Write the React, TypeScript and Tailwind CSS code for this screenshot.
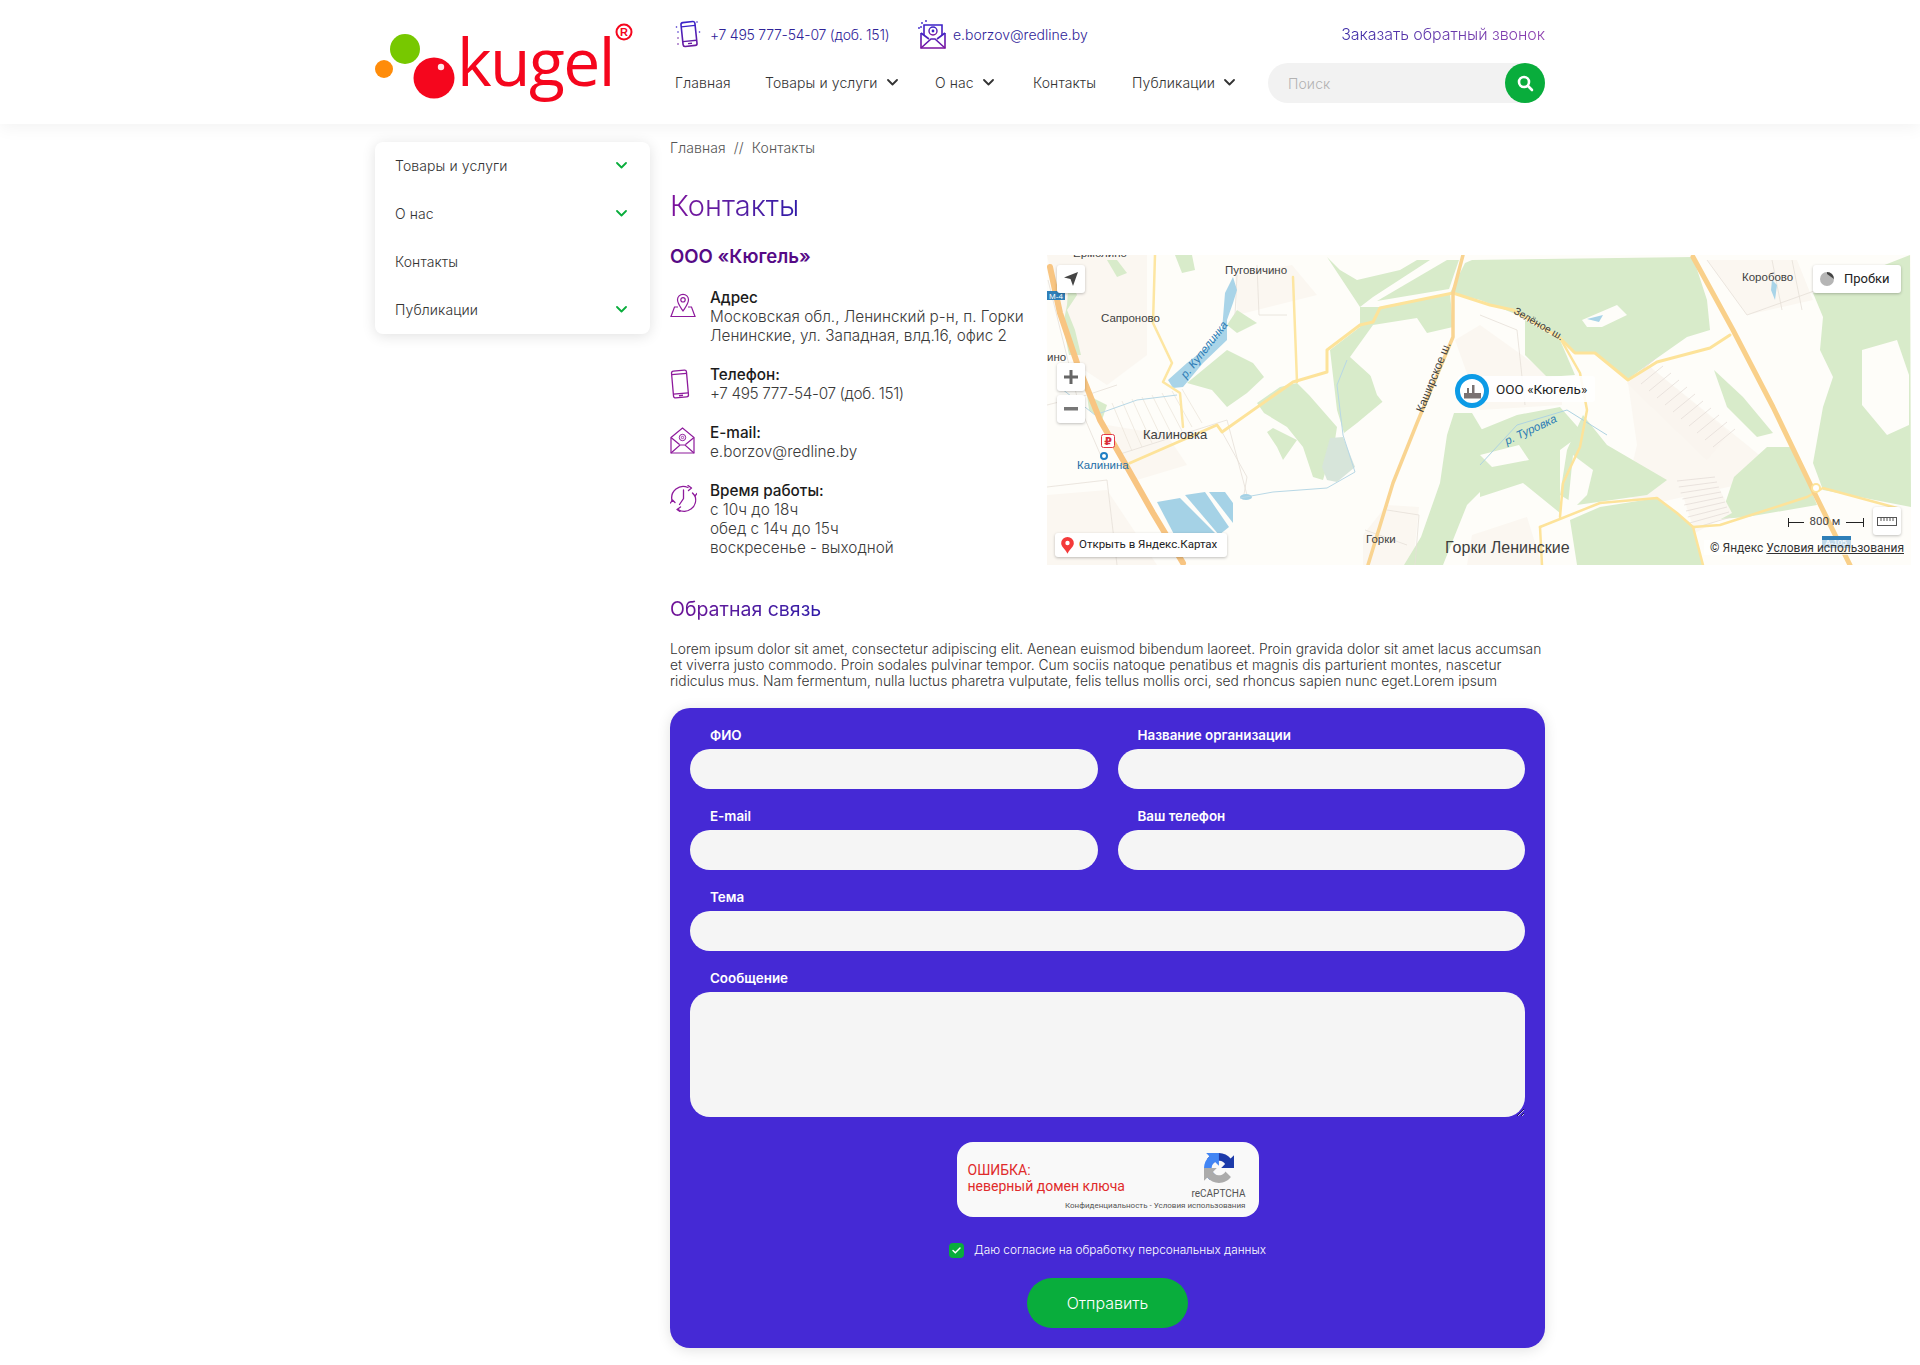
import React from 'react';

const NavChevron = ({ className }: { className?: string }) => (
  <svg width="11" height="7" viewBox="0 0 11 7" fill="none" className={className}>
    <path d="M1 1l4.5 4.5L10 1" stroke="currentColor" strokeWidth="1.8" strokeLinecap="round" strokeLinejoin="round" />
  </svg>
);

const Logo = () => (
  <div className="relative w-[265px] h-[124px] shrink-0">
    <svg width="265" height="124" viewBox="0 0 265 124" className="absolute left-0 top-0">
      <circle cx="30" cy="49" r="15" fill="#77c800" />
      <circle cx="9" cy="69" r="9" fill="#ff8c0a" />
      <circle cx="59" cy="78" r="20.5" fill="#f5061d" />
      <circle cx="66" cy="67" r="3.2" fill="#ffe9e9" />
      <circle cx="249" cy="32" r="7.5" fill="none" stroke="#f5061d" strokeWidth="2" />
      <text x="249" y="36" textAnchor="middle" fontSize="11" fontWeight="700" fill="#f5061d" fontFamily="Liberation Sans, sans-serif">R</text>
    </svg>
    <span className="absolute left-[82px] top-[15px] font-['Open_Sans',sans-serif] font-medium text-[66px] leading-[90px] text-[#f5061d] tracking-[-1.6px]">kugel</span>
  </div>
);

const HeaderPhoneIcon = () => (
  <svg width="26" height="28" viewBox="0 0 26 28" fill="none">
    <defs>
      <linearGradient id="hp" x1="0" y1="0" x2="0" y2="1">
        <stop offset="0" stopColor="#3a22c8" />
        <stop offset="1" stopColor="#6a1ba0" />
      </linearGradient>
    </defs>
    <g transform="rotate(-6 14 14)">
      <rect x="7" y="2" width="14" height="24" rx="2" stroke="url(#hp)" strokeWidth="1.6" />
      <path d="M7 6h14M7 21h14M12 23.5h4" stroke="url(#hp)" strokeWidth="1.3" />
    </g>
    <circle cx="1.5" cy="7" r="0.8" fill="#3a22c8" />
    <circle cx="3" cy="12" r="0.8" fill="#3a22c8" />
    <circle cx="3" cy="18" r="0.8" fill="#6a1ba0" />
    <circle cx="3" cy="24" r="0.8" fill="#6a1ba0" />
    <circle cx="24.5" cy="12" r="0.8" fill="#3a22c8" />
    <circle cx="22" cy="2" r="0.8" fill="#3a22c8" />
  </svg>
);

const HeaderMailIcon = () => (
  <svg width="28" height="29" viewBox="0 0 28 29" fill="none">
    <defs>
      <linearGradient id="hm" x1="0" y1="0" x2="0" y2="1">
        <stop offset="0" stopColor="#3a22c8" />
        <stop offset="1" stopColor="#7a14a0" />
      </linearGradient>
    </defs>
    <path d="M3 13v15h24V13M6 15V5h18v10" stroke="url(#hm)" strokeWidth="1.6" />
    <path d="M3 28l10-9h4l10 9M3 13l8 6M27 13l-8 6" stroke="url(#hm)" strokeWidth="1.6" />
    <circle cx="15" cy="11" r="4" stroke="url(#hm)" strokeWidth="1.4" />
    <circle cx="15" cy="11" r="1.4" fill="#3a22c8" />
    <circle cx="8" cy="1" r="0.9" fill="#3a22c8" />
    <circle cx="4" cy="3" r="0.9" fill="#3a22c8" />
    <circle cx="1" cy="8" r="0.9" fill="#3a22c8" />
    <circle cx="3" cy="7" r="0.9" fill="#3a22c8" />
  </svg>
);

const Header = () => (
  <header className="h-[124px] bg-white shadow-[0_4px_16px_rgba(0,0,0,0.05)] relative z-10">
    <div className="w-[1170px] mx-auto flex">
      <div className="w-[300px] shrink-0">
        <Logo />
      </div>
      <div className="flex-1 flex flex-col">
        <div className="flex items-center h-[28px] mt-[20px]">
          <HeaderPhoneIcon />
          <span className="ml-[9px] w-[208px] text-[14px] text-[#2f2398] font-light tracking-[-0.25px]">+7 495 777-54-07 (доб. 151)</span>
          <HeaderMailIcon />
          <span className="ml-[7px] text-[14px] text-[#2f2398] font-light">e.borzov@redline.by</span>
          <span className="ml-auto text-[16px] font-light tracking-[-0.05px] bg-linear-to-r from-[#3a2aa6] to-[#8f3fb0] bg-clip-text text-transparent">Заказать обратный звонок</span>
        </div>
        <div className="flex items-center h-[40px] mt-[15px] text-[14px] tracking-[0.1px] text-[#333333] font-light">
          <span className="w-[90px] pb-[2px]">Главная</span>
          <span className="flex items-center w-[170px] pb-[2px]">Товары и услуги<NavChevron className="ml-[9px]" /></span>
          <span className="flex items-center w-[98px] pb-[2px]">О нас<NavChevron className="ml-[9px]" /></span>
          <span className="w-[99px] pb-[2px]">Контакты</span>
          <span className="flex items-center w-[136px] pb-[2px]">Публикации<NavChevron className="ml-[9px]" /></span>
          <div className="w-[277px] h-[40px] rounded-full bg-[#f2f2f2] flex items-center justify-between pl-[20px]">
            <span className="text-[14px] text-[#b3b3b3]">Поиск</span>
            <div className="w-[40px] h-[40px] rounded-full bg-[#09ad3c] flex items-center justify-center">
              <svg width="18" height="18" viewBox="0 0 18 18" fill="none">
                <circle cx="8" cy="8" r="5" stroke="white" strokeWidth="2.6" />
                <path d="M12 12l4 4" stroke="white" strokeWidth="2.6" strokeLinecap="round" />
              </svg>
            </div>
          </div>
        </div>
      </div>
    </div>
  </header>
);

const sideItems = [
  { label: 'Товары и услуги', sub: true },
  { label: 'О нас', sub: true },
  { label: 'Контакты', sub: false },
  { label: 'Публикации', sub: true },
];

const Sidebar = () => (
  <aside className="w-[275px] mt-[18px] self-start rounded-lg bg-white shadow-[0_2px_14px_rgba(0,0,0,0.12)] shrink-0">
    {sideItems.map((item) => (
      <div key={item.label} className="h-[48px] flex items-center justify-between pl-[20px] pr-[23px] pb-[2px] text-[14px] tracking-[0.1px] font-light text-[#333333]">
        <span>{item.label}</span>
        {item.sub && <NavChevron className="text-[#09ad3c]" />}
      </div>
    ))}
  </aside>
);

const PinIcon = () => (
  <svg width="26" height="26" viewBox="0 0 26 26" fill="none" stroke="#8e1a9c" strokeWidth="1.2">
    <path d="M13 19c-3-4.5-5.5-7.5-5.5-11.2a5.5 5.5 0 0 1 11 0C18.500 11.500 16 14.500 13 19z" />
    <circle cx="13" cy="7.800" r="2.200" />
    <path d="M8 15H4.500L1 24.500h24L21.500 15H18" />
  </svg>
);

const PhoneIcon = () => (
  <svg width="20" height="30" viewBox="0 0 20 30" fill="none" stroke="#8e1a9c" strokeWidth="1.3">
    <g transform="rotate(-5 10 15)">
      <rect x="2.500" y="1.500" width="15" height="27" rx="2" />
      <path d="M2.500 5h15M2.500 24.500h15" />
      <path d="M8 26.500h4" strokeWidth="1.500" />
    </g>
  </svg>
);

const MailIcon = () => (
  <svg width="25" height="27" viewBox="0 0 25 27" fill="none" stroke="#8e1a9c" strokeWidth="1.200">
    <path d="M1 10.500L12.500 1 24 10.500V26H1z" />
    <path d="M1 26l9-8h5l9 8M1 10.500l8.500 7M24 10.500l-8.500 7" />
    <circle cx="12.500" cy="10.500" r="3.200" strokeWidth="1" />
    <circle cx="12.500" cy="10.500" r="1.200" strokeWidth="0.800" />
  </svg>
);

const ClockIcon = () => (
  <svg width="27" height="27" viewBox="0 0 27 27" fill="none" stroke="#8e1a9c" strokeWidth="1.300">
    <path d="M18 2.500A11.500 11.500 0 0 0 2 15.500M8 24.500A11.500 11.500 0 0 0 25 11" strokeLinecap="round" />
    <path d="M13.500 5v8.500l-4 6" strokeLinecap="round" />
    <path d="M18 0.500l3.500 2.500-3 2.500M10.500 22l-3.500 2.500 3 2" strokeLinecap="round" strokeLinejoin="round" />
    <path d="M22.500 8l2.500 3 2-2.500M0.500 18l2-3 2.500 2.500" strokeLinecap="round" strokeLinejoin="round" />
  </svg>
);

const ContactItem = ({ icon, title, lines, lineClass }: { icon: React.ReactNode; title: string; lines: string[]; lineClass?: string }) => (
  <div className="flex">
    <div className="w-[40px] shrink-0 pt-[4px]">{icon}</div>
    <div className="text-[15.3px] leading-[19px] text-[#3a3a3a] font-light whitespace-nowrap">
      <div className="font-medium text-[#1b1b1b]">{title}</div>
      {lines.map((l) => (
        <div key={l} className={lineClass}>{l}</div>
      ))}
    </div>
  </div>
);

const greens: string[] = [
  '140,128 180,95 206,108 217,122 200,138 180,152 165,135',
  '210,148 233,132 250,128 262,140 290,172 288,185 276,225 266,222 256,192 240,172 217,158',
  '283,95 313,72 313,52 333,52 403,38 406,72 380,78 370,63 326,70 303,102 336,132 346,138 310,168 297,178 290,155',
  '280,2 293,15 310,25 353,15 370,5 383,5 326,42 313,52',
  '330,46 400,5 412,5 402,34',
  '425,5 646,2 660,45 663,75 640,82 603,108 580,125 546,98 526,98 513,82 476,62 433,45 403,38 418,8',
  '478,65 513,85 528,120 500,122 478,100',
  '523,265 553,252 610,243 630,258 646,272 656,310 530,310',
  '407,158 425,158 437,178 450,220 420,250 396,310 357,310 374,282 393,228 400,180',
  '433,175 470,160 513,152 536,178 513,195 513,258 476,228 433,242',
  '766,38 863,0 864,252 776,235 766,208 776,152 786,122 773,95 776,62',
  '687,222 720,192 747,192 770,250 700,262 673,264',
  '667,115 696,142 726,178 710,182 680,152',
  '226,173 250,185 236,205 230,192 220,177',
  '22,22 30,40 20,55 28,75 34,100 22,100 16,70 20,50',
  '60,5 70,5 80,18 70,22',
  '128,0 145,0 148,15 135,18',
  '190,55 210,68 190,78 180,70',
  '40,140 60,150 55,165 42,155',
  '536,160 560,190 620,225 600,240 530,250 513,240 520,195',
];

const whites: string[] = [
  '535,65 570,50 580,60 555,72 540,72',
  '815,95 850,85 862,120 862,170 840,180 815,150',
  '526,200 546,215 540,240 520,260',
  '433,200 472,190 482,205 445,212',
  '320,110 350,95 376,85 380,110 350,165 330,140',
];

const settlements: string[] = [
  '0,0 100,0 100,100 60,130 30,110 10,50',
  '188,20 245,10 270,40 190,60',
  '316,280 340,250 372,252 366,310 316,310',
  '581,128 603,112 700,190 712,200 690,230 600,250 578,240 590,190',
  '408,85 433,70 475,100 515,130 515,150 433,155',
  '660,5 750,5 766,45 700,60',
  '425,280 480,262 495,310 420,310',
  '0,240 60,235 110,310 0,310',
  '60,170 120,180 140,210 90,225',
];

const thinLines: string[] = [
  '70,200 180,165 200,240',
  '0,232 60,225 70,310',
  '0,150 40,140 70,130',
  '1,25 32,150 60,215',
  '175,177 200,222 196,245',
  '190,20 188,60',
  '210,10 212,60 240,60',
  '340,255 372,260 368,310',
  '318,275 360,290',
  '433,60 470,75 478,150',
  '660,5 700,60 770,35',
  '725,5 735,55',
  '745,5 755,55',
];

const MapRoads = () => (
  <g fill="none" strokeLinecap="round" strokeLinejoin="round">
    <polyline points="108,0 106,68 125,108 116,127 133,138 136,172" stroke="#fde6a2" strokeWidth="2.500" />
    <polyline points="246,22 250,127" stroke="#fde6a2" strokeWidth="2.500" />
    <polyline points="83,208 170,170 175,177 246,127 280,117 280,95 313,70 326,67 333,53 406,38 443,50 466,55 513,83 528,98 548,98 581,125 610,107 663,93 683,80" stroke="#fde39a" strokeWidth="3" />
    <polyline points="513,83 533,118 540,155 533,192 516,228 513,262" stroke="#fde39a" strokeWidth="2.500" />
    <polyline points="493,272 553,248 610,243 630,258 646,272 673,270 760,242 776,233 850,253" stroke="#fde39a" strokeWidth="2.500" />
    <polyline points="493,272 495,310" stroke="#fde39a" strokeWidth="2.500" />
    <polyline points="646,272 656,310" stroke="#fde39a" strokeWidth="2.500" />
    <polyline points="416,0 406,38 406,82 370,168 346,228 321,310" stroke="#f9d491" strokeWidth="3.500" />
    <polyline points="3,12 13,58 30,108 53,165 80,212 106,258 136,308" stroke="#f8c582" strokeWidth="6" />
    <polyline points="646,2 686,75 726,152 766,235 803,310" stroke="#f9d08a" strokeWidth="5" />
    <circle cx="769" cy="233" r="4" fill="white" stroke="#fde39a" strokeWidth="2" />
  </g>
);

const MapArt = () => (
  <svg width="864" height="310" viewBox="0 0 864 310" className="block" fontFamily="Roboto, sans-serif">
    <rect width="864" height="310" fill="#fefdf9" />
    {settlements.map((p) => (
      <polygon key={p} points={p} fill="#fbf7f1" />
    ))}
    {greens.map((p) => (
      <polygon key={p} points={p} fill="#d8ebca" />
    ))}
    {whites.map((p) => (
      <polygon key={p} points={p} fill="#fefdf9" />
    ))}
    {/* садовые участки */}
    <polygon points="580,128 603,112 682,178 660,205" fill="#faf5ef" />
    {[0, 1, 2, 3, 4, 5, 6, 7, 8, 9, 10].map((i) => (
      <line key={i} x1={586 + i * 8} y1={122 + i * 7} x2={608 + i * 8} y2={104 + i * 7} stroke="#e4ddd8" strokeWidth="0.800" />
    ))}
    <polygon points="630,222 665,220 685,258 648,278" fill="#fbf7f1" />
    {[0, 1, 2, 3, 4, 5, 6, 7, 8].map((i) => (
      <line key={i} x1={630 + i * 1.800} y1={226 + i * 6} x2={668 + i * 2} y2={222 + i * 5} stroke="#e4ddd8" strokeWidth="0.800" />
    ))}
    {[0, 1, 2, 3, 4, 5, 6, 7].map((i) => (
      <line key={i} x1={85 + i * 10} y1={196 - i * 4} x2={65 + i * 10} y2={148 - i * 2} stroke="#ece6dc" strokeWidth="0.800" />
    ))}
    {thinLines.map((p) => (
      <polyline key={p} points={p} fill="none" stroke="#e6e0d8" strokeWidth="0.800" />
    ))}
    {/* вода */}
    <polygon points="121,125 140,108 163,90 175,75 178,38 186,22 190,35 186,48 180,65 180,85 156,108 136,132 126,133" fill="#a9d4e8" />
    <polygon points="110,247 133,243 170,280 150,300 130,285" fill="#a5d2e6" />
    <polygon points="138,240 158,237 182,272 172,280" fill="#a5d2e6" />
    <polygon points="162,237 178,237 186,248 186,268" fill="#a5d2e6" />
    <ellipse cx="199" cy="242" rx="6" ry="3" fill="#a5d2e6" />
    <polygon points="275,212 283,183 296,182 308,212 290,227 280,225" fill="#d7e5da" />
    <polyline points="193,243 226,237 280,233 308,217 296,180 290,130 300,105" fill="none" stroke="#b8d8e6" strokeWidth="1" />
    <polyline points="433,210 470,170 520,155 560,180" fill="none" stroke="#aed3e2" strokeWidth="1" />
    <polyline points="10,130 48,160 90,145 130,140" fill="none" stroke="#b8d8e6" strokeWidth="1" />
    <polygon points="540,64 556,60 552,67" fill="#a9d4e8" />
    <polygon points="725,25 730,30 728,45 724,35" fill="#a9d4e8" />
    <MapRoads />
    {/* подписи */}
    <g fill="#3f3f3f" fontSize="11.500" fontFamily="Liberation Sans, sans-serif">
      <text x="26" y="2">Ермолино</text>
      <text x="178" y="19">Пуговичино</text>
      <text x="54" y="67">Сапроново</text>
      <text x="0" y="106">ино</text>
      <text x="96" y="184" fontSize="13">Калиновка</text>
      <text x="319" y="288">Горки</text>
      <text x="398" y="298" fontSize="16">Горки Ленинские</text>
      <text x="695" y="26">Коробово</text>
      <text x="376" y="158" transform="rotate(-68 376 158)">Каширское ш.</text>
      <text x="466" y="58" fontSize="10.500" transform="rotate(30 466 58)">Зелёное ш.</text>
    </g>
    <g fill="#2c7cb5" fontSize="11.500" fontStyle="italic" fontFamily="Liberation Sans, sans-serif">
      <text x="139" y="124" transform="rotate(-52 139 124)">р. Купелинка</text>
      <text x="460" y="190" transform="rotate(-25 460 190)">р. Туровка</text>
      <text x="30" y="214" fontStyle="normal" fill="#1f6ea6">Калинина</text>
    </g>
    <rect x="0" y="36" width="18" height="9" fill="#2f7fb8" />
    <text x="9" y="44" textAnchor="middle" fontSize="8" fill="white" fontFamily="Liberation Sans, sans-serif">М-4</text>
    <rect x="775" y="281" width="29" height="12" fill="#2f7fb8" />
    <text x="789" y="290" textAnchor="middle" fontSize="8" fill="white" fontFamily="Liberation Sans, sans-serif">А-105</text>
    <rect x="54.500" y="179.500" width="13" height="13" rx="2" fill="white" stroke="#e23a46" />
    <text x="61" y="190" textAnchor="middle" fontSize="11" fontWeight="700" fill="#d92d3a" fontFamily="DejaVu Sans, sans-serif">₽</text>
    <circle cx="57" cy="201" r="3" fill="white" stroke="#1f7fc4" strokeWidth="2" />
  </svg>
);

const MapBtn = ({ className, children }: { className: string; children: React.ReactNode }) => (
  <div className={`absolute bg-white rounded-[3px] shadow-[0_1px_3px_rgba(0,0,0,0.25)] flex items-center justify-center ${className}`}>{children}</div>
);

const YandexMap = () => (
  <div className="relative w-[864px] h-[310px] mt-[30px] shrink-0 overflow-hidden font-['Roboto',sans-serif] text-[#222222]">
    <MapArt />
    <MapBtn className="left-[10px] top-[10px] w-[28px] h-[28px]">
      <svg width="16" height="16" viewBox="0 0 16 16"><path d="M15 1L1 6.500l6.500 1.500L10 15z" fill="#444444" /></svg>
    </MapBtn>
    <MapBtn className="left-[10px] top-[108px] w-[28px] h-[28px]">
      <svg width="14" height="14" viewBox="0 0 14 14"><path d="M5.500 0h3v5.500H14v3H8.500V14h-3V8.500H0v-3h5.500z" fill="#666666" /></svg>
    </MapBtn>
    <MapBtn className="left-[10px] top-[140px] w-[28px] h-[28px]">
      <svg width="14" height="4" viewBox="0 0 14 4"><rect width="14" height="3.500" fill="#777777" /></svg>
    </MapBtn>
    <MapBtn className="left-[8px] top-[278px] w-[172px] h-[24px] justify-start pl-[6px] text-[11.5px] whitespace-nowrap">
      <svg width="13" height="17" viewBox="0 0 13 17" className="mr-[5px]"><path d="M6.500 0a6.300 6.300 0 0 1 6.300 6.300c0 3.500-3.500 5-6.300 10.500C3.700 11.300.2 9.800.2 6.300A6.300 6.300 0 0 1 6.500 0z" fill="#f43a3a" /><circle cx="6.500" cy="6" r="2.200" fill="white" /></svg>
      Открыть в Яндекс.Картах
    </MapBtn>
    <MapBtn className="left-[766px] top-[10px] w-[88px] h-[28px] justify-start pl-[6px] text-[13px]">
      <svg width="16" height="16" viewBox="0 0 16 16" className="mr-[9px]"><circle cx="8" cy="8" r="7" fill="#b5b5b5" /><path d="M8 1a7 7 0 0 1 7 7L8 3z" fill="#444444" /></svg>
      Пробки
    </MapBtn>
    <MapBtn className="left-[826px] top-[252px] w-[28px] h-[28px]">
      <svg width="20" height="9" viewBox="0 0 20 9" fill="none" stroke="#555555"><rect x="0.500" y="0.500" width="19" height="8" /><path d="M4 1v3M7 1v3M10 1v3M13 1v3M16 1v3" /></svg>
    </MapBtn>
    <div className="absolute left-[391px] top-[119px] h-[30px]">
      <div className="absolute left-[20px] top-[2px] w-[137px] h-[26px] bg-white/90 rounded-[3px] flex items-center pl-[38px] text-[13.5px] whitespace-nowrap">ООО «Кюгель»</div>
      <div className="absolute left-[17px] top-0 w-[34px] h-[34px] rounded-full bg-white border-[5px] border-[#0d9be6] flex items-center justify-center">
        <svg width="17" height="15" viewBox="0 0 17 15"><path d="M0 9h3V4h2v5h3V1h2.500v8H17v5.500H0z" fill="#7a7272" /></svg>
      </div>
    </div>
    <div className="absolute left-[741px] top-[260px] w-[76px] h-[14px] flex items-center text-[11.5px] text-[#444444]">
      <span className="w-px h-[9px] bg-[#222222]" />
      <span className="w-[15px] h-px bg-[#222222]" />
      <span className="flex-1 text-center">800 м</span>
      <span className="w-[17px] h-px bg-[#222222]" />
      <span className="w-px h-[9px] bg-[#222222]" />
    </div>
    <div className="absolute left-[657px] top-[285px] w-[200px] h-[15px] bg-white/70 flex items-center justify-end text-[12px] whitespace-nowrap text-[#333333]">
      © Яндекс&nbsp;<span className="underline">Условия использования</span>
    </div>
  </div>
);

const RecaptchaLogo = () => (
  <svg width="30" height="30" viewBox="0 0 64 64">
    <path d="M64 31.955l-.033-1.37V4.687l-7.16 7.16C50.948 4.674 42.033.093 32.05.093c-10.4 0-19.622 4.96-25.458 12.64l11.736 11.86a15.55 15.55 0 0 1 4.754-5.334c2.05-1.6 4.952-2.906 8.968-2.906.485 0 .86.057 1.135.163 4.976.393 9.288 3.14 11.828 7.124l-8.307 8.307 26.296.008" fill="#1c3aa9" />
    <path d="M31.862.094l-1.37.033H4.594l7.16 7.16C4.58 13.147 0 22.06 0 32.046c0 10.4 4.96 19.622 12.64 25.458l11.86-11.736a15.55 15.55 0 0 1-5.334-4.754c-1.6-2.05-2.906-4.952-2.906-8.968 0-.485.057-.86.163-1.135.393-4.976 3.14-9.288 7.124-11.828l8.307 8.307.008-26.296" fill="#4285f4" />
    <path d="M.001 32.045l.033 1.37v25.898l7.16-7.16c5.86 7.173 14.774 11.754 24.76 11.754 10.4 0 19.622-4.96 25.458-12.64l-11.736-11.86a15.55 15.55 0 0 1-4.754 5.334c-2.05 1.6-4.952 2.906-8.968 2.906-.485 0-.86-.057-1.135-.163-4.976-.393-9.288-3.14-11.828-7.124l8.307-8.307-26.296-.008" fill="#ababab" />
  </svg>
);

const Recaptcha = () => (
  <div className="relative w-[302px] h-[75px] mx-auto mt-[25px] rounded-[16px] bg-[#f9f9f9] font-['Roboto',sans-serif]">
    <div className="absolute left-[11px] top-[20px] text-[14px] leading-[16px] text-[#e02b2b]">
      ОШИБКА:<br />неверный домен ключа
    </div>
    <div className="absolute right-[13px] top-[11px] w-[54px] flex flex-col items-center">
      <RecaptchaLogo />
      <span className="text-[10px] leading-[12px] mt-[5px] text-[#555555]">reCAPTCHA</span>
    </div>
    <div className="absolute right-[13px] top-[59px] text-[8px] leading-[10px] text-[#555555] whitespace-nowrap">Конфиденциальность - Условия использования</div>
  </div>
);

const Field = ({ label, className }: { label: string; className?: string }) => (
  <div className={className}>
    <div className="h-[18px] leading-[16px] pl-[20px] text-[13.4px] font-semibold text-white mb-[4px]">{label}</div>
    <input className="block w-full h-[40px] rounded-[20px] bg-[#f5f5f5] outline-none" />
  </div>
);

const Form = () => (
  <form className="h-[640px] mt-[19px] rounded-[20px] bg-[#4529d5] px-[20px] pt-[19px] shadow-[0_2px_14px_rgba(0,0,0,0.12)]">
    <div className="grid grid-cols-2 gap-x-[20px] gap-y-[19px]">
      <Field label="ФИО" />
      <Field label="Название организации" />
      <Field label="E-mail" />
      <Field label="Ваш телефон" />
      <Field label="Тема" className="col-span-2" />
      <div className="col-span-2">
        <div className="h-[18px] leading-[16px] pl-[20px] text-[13.4px] font-semibold text-white mb-[4px]">Сообщение</div>
        <textarea className="block w-full h-[125px] rounded-[20px] bg-[#f5f5f5] outline-none" />
      </div>
    </div>
    <Recaptcha />
    <div className="flex items-center justify-center mt-[26px] h-[15px]">
      <span className="w-[15px] h-[15px] rounded-[4px] bg-[#09ad3c] flex items-center justify-center">
        <svg width="9" height="7" viewBox="0 0 9 7" fill="none"><path d="M1 3.500l2.300 2.300L8 1" stroke="white" strokeWidth="1.400" strokeLinecap="round" /></svg>
      </span>
      <span className="ml-[10px] text-[11.8px] font-light text-white">Даю согласие на обработку персональных данных</span>
    </div>
    <button type="button" className="block mx-auto mt-[20px] w-[161px] h-[50px] rounded-full bg-[#09ad3c] text-[16px] font-light text-white">Отправить</button>
  </form>
);

const Content = () => (
  <main className="w-[875px] ml-[20px] shrink-0">
    <div className="mt-[14px] h-[20px] leading-[20px] text-[14px] tracking-[0.1px] font-light text-[#555555]">Главная&nbsp; //&nbsp; Контакты</div>
    <h1 className="mt-[31px] h-[36px] leading-[34px] text-[29px] font-light"><span className="bg-linear-to-r from-[#7d0f9c] to-[#2f1aa8] bg-clip-text text-transparent">Контакты</span></h1>
    <div className="flex">
      <div className="w-[377px] shrink-0">
        <h2 className="mt-[20px] h-[24px] leading-[22px] text-[18.6px] font-semibold text-[#560a86]">ООО «Кюгель»</h2>
        <div className="mt-[19px] flex flex-col gap-[20px]">
          <ContactItem icon={<PinIcon />} title="Адрес" lines={['Московская обл., Ленинский р-н, п. Горки', 'Ленинские, ул. Западная, влд.16, офис 2']} />
          <ContactItem icon={<PhoneIcon />} title="Телефон:" lines={['+7 495 777-54-07 (доб. 151)']} lineClass="tracking-[-0.35px]" />
          <ContactItem icon={<MailIcon />} title="E-mail:" lines={['e.borzov@redline.by']} />
          <ContactItem icon={<ClockIcon />} title="Время работы:" lines={['с 10ч до 18ч', 'обед с 14ч до 15ч', 'воскресенье - выходной']} />
        </div>
      </div>
      <YandexMap />
    </div>
    <h3 className="mt-[30px] h-[28px] leading-[28px] text-[19.5px] font-normal"><span className="bg-linear-to-r from-[#6f0f96] to-[#2f1aa8] bg-clip-text text-transparent">Обратная связь</span></h3>
    <p className="mt-[18px] text-[13.8px] leading-[16px] font-light text-[#333333]">
      Lorem ipsum dolor sit amet, consectetur adipiscing elit. Aenean euismod bibendum laoreet. Proin gravida dolor sit amet lacus accumsan et viverra justo commodo. Proin sodales pulvinar tempor. Cum sociis natoque penatibus et magnis dis parturient montes, nascetur ridiculus mus. Nam fermentum, nulla luctus pharetra vulputate, felis tellus mollis orci, sed rhoncus sapien nunc eget.Lorem ipsum
    </p>
    <Form />
  </main>
);

export default function App() {
  return (
    <div className="min-h-[1365px] bg-white font-['Inter',sans-serif] pb-[17px]">
      <Header />
      <div className="w-[1170px] mx-auto flex">
        <Sidebar />
        <Content />
      </div>
    </div>
  );
}
